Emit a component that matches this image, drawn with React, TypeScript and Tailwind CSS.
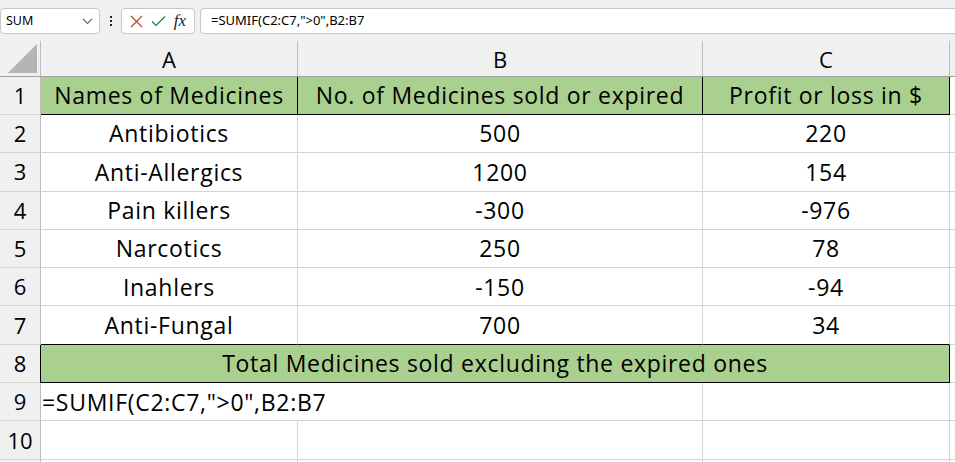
import React from "react";

const rows: [string, string, string][] = [
  ["Antibiotics", "500", "220"],
  ["Anti-Allergics", "1200", "154"],
  ["Pain killers", "-300", "-976"],
  ["Narcotics", "250", "78"],
  ["Inahlers", "-150", "-94"],
  ["Anti-Fungal", "700", "34"],
];

const font = { fontFamily: "'Open Sans', 'Noto Sans', sans-serif" };

function RowHead({ n }: { n: number }) {
  return (
    <div className="w-[41px] shrink-0 bg-[#f0f0f0] border-r border-[#bdbdbd] border-b border-b-[#d4d4d4] flex items-center justify-center text-[22px] text-black">
      {n}
    </div>
  );
}

const cellText = "text-[23px] tracking-[0.7px] text-black";

export default function App() {
  return (
    <div className="w-[955px] h-[462px] overflow-hidden bg-white" style={font}>
      {/* Formula bar */}
      <div className="h-[41px] bg-[#f0f0f0] flex items-start pt-[8px] pl-[0px]">
        <div className="w-[100px] h-[26px] bg-white border border-[#c8c8c8] rounded-[4px] flex items-center justify-between pl-[5px] pr-[6px] text-[12.5px] text-black" style={{ fontFamily: "'Noto Sans', sans-serif" }}>
          <span>SUM</span>
          <svg width="11" height="7" viewBox="0 0 11 7"><path d="M1 1l4.5 4.5L10 1" fill="none" stroke="#6a6a5a" strokeWidth="1.2" /></svg>
        </div>
        <div className="w-[21px] h-[26px] flex flex-col items-center justify-center gap-[2px]">
          <span className="w-[2px] h-[2px] bg-[#222]" />
          <span className="w-[2px] h-[2px] bg-[#222]" />
          <span className="w-[2px] h-[2px] bg-[#222]" />
        </div>
        <div className="w-[74px] h-[26px] bg-white border border-[#c8c8c8] rounded-[4px] flex items-center justify-around px-[4px]">
          <svg width="13" height="13" viewBox="0 0 13 13"><path d="M1 1l11 11M12 1L1 12" stroke="#b54a28" strokeWidth="1.2" /></svg>
          <svg width="15" height="12" viewBox="0 0 15 12"><path d="M1 6.5l4 4L14 1.5" fill="none" stroke="#1f7a3d" strokeWidth="1.2" /></svg>
          <span className="text-[17px] italic text-[#222]" style={{ fontFamily: "'Liberation Serif', serif" }}>fx</span>
        </div>
        <div className="ml-[5px] flex-1 h-[26px] bg-white border border-[#c8c8c8] rounded-l-[4px] border-r-0 flex items-center pl-[10px] text-[13px] text-black" style={{ fontFamily: "'Noto Sans', sans-serif" }}>
          =SUMIF(C2:C7,"&gt;0",B2:B7
        </div>
      </div>

      {/* Column headers */}
      <div className="h-[36px] flex bg-[#f0f0f0] border-b border-[#9e9e9e]">
        <div className="w-[41px] shrink-0 border-r border-[#bdbdbd] flex items-end justify-end pr-[3px] pb-[3px]">
          <svg width="29" height="29" viewBox="0 0 29 29"><path d="M29 0V29H0Z" fill="#b4b4b4" /></svg>
        </div>
        <div className="w-[257px] shrink-0 border-r border-[#bdbdbd] flex items-center justify-center text-[22px] text-black pt-[2px]">A</div>
        <div className="w-[405px] shrink-0 border-r border-[#bdbdbd] flex items-center justify-center text-[22px] text-black pt-[2px]">B</div>
        <div className="w-[247px] shrink-0 border-r border-[#bdbdbd] flex items-center justify-center text-[22px] text-black pt-[2px]">C</div>
        <div className="flex-1" />
      </div>

      {/* Row 1 */}
      <div className="h-[38px] flex">
        <RowHead n={1} />
        <div className={`w-[257px] shrink-0 bg-[#a9d08e] border-r border-b border-black flex items-center justify-center ${cellText}`}>Names of Medicines</div>
        <div className={`w-[405px] shrink-0 bg-[#a9d08e] border-r border-b border-black flex items-center justify-center ${cellText}`}>No. of Medicines sold or expired</div>
        <div className={`w-[247px] shrink-0 bg-[#a9d08e] border-r border-b border-black flex items-center justify-center ${cellText}`}>Profit or loss in $</div>
        <div className="flex-1 border-b border-[#d4d4d4]" />
      </div>

      {rows.map((r, i) => (
        <div key={i} className="h-[38.3px] flex">
          <RowHead n={i + 2} />
          <div className={`w-[257px] shrink-0 border-r border-r-[#d4d4d4] border-b ${i === 5 ? "border-b-black" : "border-b-[#d4d4d4]"} flex items-center justify-center ${cellText}`}>{r[0]}</div>
          <div className={`w-[405px] shrink-0 border-r border-r-[#d4d4d4] border-b ${i === 5 ? "border-b-black" : "border-b-[#d4d4d4]"} flex items-center justify-center ${cellText}`}>{r[1]}</div>
          <div className={`w-[247px] shrink-0 border-r border-r-[#d4d4d4] border-b ${i === 5 ? "border-b-black" : "border-b-[#d4d4d4]"} flex items-center justify-center ${cellText}`}>{r[2]}</div>
          <div className="flex-1 border-b border-[#d4d4d4]" />
        </div>
      ))}

      {/* Row 8 merged */}
      <div className="h-[38.5px] flex">
        <RowHead n={8} />
        <div className={`w-[910px] shrink-0 bg-[#a9d08e] border-l border-r border-b border-black flex items-center justify-center -ml-px ${cellText}`}>
          Total Medicines sold excluding the expired ones
        </div>
        <div className="flex-1 border-b border-[#d4d4d4]" />
      </div>

      {/* Row 9 */}
      <div className="h-[38px] flex relative">
        <RowHead n={9} />
        <div className="w-[257px] shrink-0 border-r border-[#d4d4d4] border-b border-b-[#d4d4d4]" />
        <div className="w-[405px] shrink-0 border-r border-[#d4d4d4] border-b border-b-[#d4d4d4]" />
        <div className="w-[247px] shrink-0 border-r border-[#d4d4d4] border-b border-b-[#d4d4d4]" />
        <div className="flex-1 border-b border-[#d4d4d4]" />
        <div className={`absolute left-[42px] top-0 h-[37px] flex items-center bg-white pr-[2px] ${cellText}`}>=SUMIF(C2:C7,"&gt;0",B2:B7</div>
      </div>

      {/* Row 10 */}
      <div className="h-[38.5px] flex">
        <RowHead n={10} />
        <div className="w-[257px] shrink-0 border-r border-[#d4d4d4] border-b border-b-[#d4d4d4]" />
        <div className="w-[405px] shrink-0 border-r border-[#d4d4d4] border-b border-b-[#d4d4d4]" />
        <div className="w-[247px] shrink-0 border-r border-[#d4d4d4] border-b border-b-[#d4d4d4]" />
        <div className="flex-1 border-b border-[#d4d4d4]" />
      </div>
      <div className="h-[10px] flex">
        <div className="w-[41px] shrink-0 bg-[#f0f0f0] border-r border-[#bdbdbd]" />
        <div className="w-[257px] shrink-0 border-r border-[#d4d4d4]" />
        <div className="w-[405px] shrink-0 border-r border-[#d4d4d4]" />
        <div className="w-[247px] shrink-0 border-r border-[#d4d4d4]" />
      </div>
    </div>
  );
}
